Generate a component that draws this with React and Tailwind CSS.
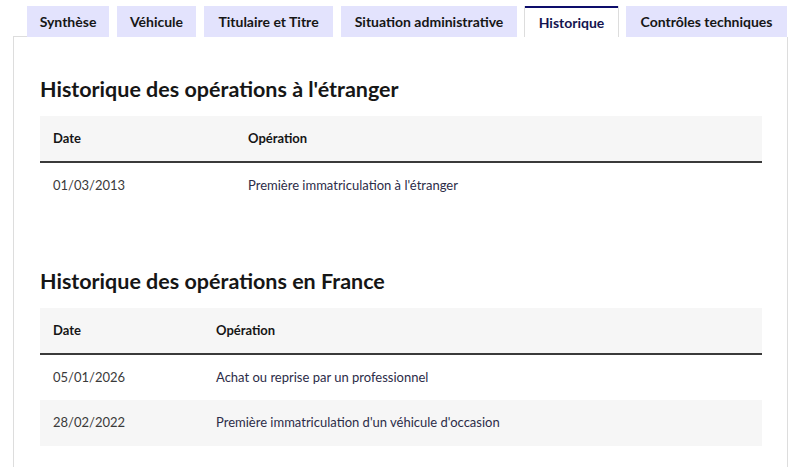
import React from "react";

const tabs = [
    { label: "Synthèse", w: "w-[82px]" },
    { label: "Véhicule", w: "w-[79px]" },
    { label: "Titulaire et Titre", w: "w-[129px]" },
    { label: "Situation administrative", w: "w-[176px]" },
    { label: "Historique", w: "w-[93px]", active: true },
    { label: "Contrôles techniques", w: "w-[161px]" },
];

const etranger = [{ date: "01/03/2013", op: "Première immatriculation à l'étranger" }];

const france = [
    { date: "05/01/2026", op: "Achat ou reprise par un professionnel" },
    { date: "28/02/2022", op: "Première immatriculation d'un véhicule d'occasion" },
];

function HistoryTable({ rows, dateWidth }) {
    return (
        <table className="w-[722px] border-collapse text-[13px]">
            <thead>
                <tr className="bg-[#f6f6f6] border-b-2 border-[#3a3a3a]">
                    <th className="h-[46px] pl-[13px] text-left font-bold text-[#161616]" style={{ width: dateWidth }}>
                        Date
                    </th>
                    <th className="text-left font-bold text-[#161616]">Opération</th>
                </tr>
            </thead>
            <tbody>
                {rows.map((row, i) => (
                    <tr key={row.date} className={i % 2 === 1 ? "bg-[#f6f6f6]" : "bg-white"}>
                        <td className="h-[46px] pl-[13px] text-[#3a3a3a]">{row.date}</td>
                        <td className="text-[#2c2c48]">{row.op}</td>
                    </tr>
                ))}
            </tbody>
        </table>
    );
}

export default function App() {
    return (
        <div className="w-[800px] h-[467px] bg-white overflow-hidden font-['Lato',sans-serif]">
            {/* onglets */}
            <div className="flex pt-[6px] pl-[13px]">
                <div className="w-[14px] border-b border-[#dddddd]" />
                <div className="flex gap-[8px]">
                    {tabs.map((tab) =>
                        tab.active ? (
                            <div
                                key={tab.label}
                                className={`${tab.w} h-[31px] flex items-center justify-center whitespace-nowrap bg-white border-t-2 border-[#0d0d6b] text-[14px] font-bold text-[#14144f] shadow-[1px_0_0_#dddddd,-1px_0_0_#dddddd]`}
                            >
                                {tab.label}
                            </div>
                        ) : (
                            <div
                                key={tab.label}
                                className={`${tab.w} h-[31px] flex items-center justify-center whitespace-nowrap bg-[#e3e3fd] text-[14px] font-bold text-[#161616]`}
                            >
                                {tab.label}
                            </div>
                        )
                    )}
                </div>
            </div>

            {/* panneau */}
            <div className="ml-[13px] w-[775px] h-[440px] border-l border-r border-[#dddddd] pl-[26px] pt-[38px]">
                <h2 className="text-[21.5px] leading-[28px] font-bold text-[#161616]">
                    Historique des opérations à l'étranger
                </h2>
                <div className="mt-[13px]">
                    <HistoryTable rows={etranger} dateWidth={208} />
                </div>

                <h2 className="mt-[59px] text-[21.5px] leading-[28px] font-bold text-[#161616]">
                    Historique des opérations en France
                </h2>
                <div className="mt-[13px]">
                    <HistoryTable rows={france} dateWidth={176} />
                </div>
            </div>
        </div>
    );
}
